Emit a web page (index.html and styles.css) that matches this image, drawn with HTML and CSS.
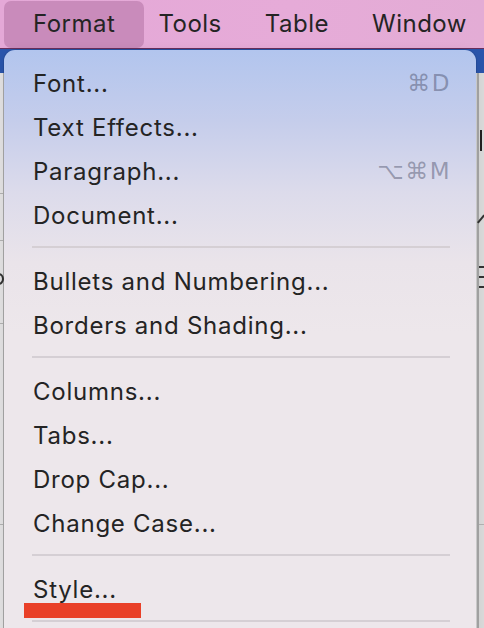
FILE: index.html
```html
<!DOCTYPE html>
<html>
<head>
<meta charset="UTF-8">
<meta name="viewport" content="width=device-width, initial-scale=1.0">
<title>Format menu</title>
<link rel="stylesheet" href="styles.css">
</head>
<body>
	<div class="menubar">
		<div class="bar-item active">Format</div>
		<div class="bar-item">Tools</div>
		<div class="bar-item">Table</div>
		<div class="bar-item">Window</div>
	</div>
	<div class="workspace">
		<div class="ribbon"></div>
		<div class="doc">
			<div class="side left">
				<span class="tick t1"></span>
				<span class="tick t2"></span>
				<span class="tick t3"></span>
				<span class="tick t4"></span>
				<span class="ring"></span>
			</div>
			<div class="side right">
				<span class="cursor"></span>
				<span class="slash"></span>
				<span class="list"><i></i><i></i><i></i></span>
				<span class="tick t4"></span>
			</div>
		</div>

		<!-- dropdown over the document -->
		<div class="menu">
			<div class="item"><span>Font...</span><span class="key">&#8984;D</span></div>
			<div class="item"><span>Text Effects...</span></div>
			<div class="item"><span>Paragraph...</span><span class="key">&#8997;&#8984;M</span></div>
			<div class="item"><span>Document...</span></div>
			<div class="sep"></div>
			<div class="item"><span>Bullets and Numbering...</span></div>
			<div class="item"><span>Borders and Shading...</span></div>
			<div class="sep"></div>
			<div class="item"><span>Columns...</span></div>
			<div class="item"><span>Tabs...</span></div>
			<div class="item"><span>Drop Cap...</span></div>
			<div class="item"><span>Change Case...</span></div>
			<div class="sep"></div>
			<div class="item"><span>Style...</span></div>
			<div class="sep"></div>
		</div>
		<div class="mark"></div>
	</div>
</body>
</html>
```
FILE: styles.css
```css
/* base */
html, body {margin:0; padding:0;}
body {
	width:484px; height:628px; overflow:hidden;
	font-family:Inter, "Noto Sans", "DejaVu Sans", sans-serif;
	color:#242424;
	background:#e7e6e7;
}

/* top menu bar */
.menubar {
	display:flex; align-items:center; gap:43px;
	height:48px; padding-left:33px;
	background:linear-gradient(90deg, #e4a8d7 0%, #e6abd8 60%, #e3acd5 100%);
	border-bottom:1px solid #6b2f5c;
	font-size:24px;
	letter-spacing:0.5px;
}
.bar-item {position:relative; height:47px; line-height:45px; white-space:nowrap;}
.bar-item.active::before {
	content:""; position:absolute; z-index:-1;
	left:-29px; right:-29px; top:0; bottom:0;
	border-radius:7px;
	background:#c98bbb;
}
.bar-item.active {z-index:0;}

/* app behind the menu */
.workspace {position:relative; height:579px;}
.ribbon {height:24px; background:#2a55ad;}
.doc {position:relative; height:555px; display:flex; justify-content:space-between;}
.side {position:relative; height:100%;}
.side.left {border-right:1px solid #b9b9b9; width:3px;}
.side.right {border-left:2px solid #a8a8a8; width:5px; background:#dcdcdc;}
.tick {position:absolute; left:0; width:100%; height:1px; background:#b4b4b4;}
.t1 {top:120px;}
.t2 {top:167px;}
.t3 {top:250px;}
.t4 {top:451px;}
.ring {position:absolute; left:-7px; top:200px; width:7px; height:8px; border:2px solid #333; border-radius:50%;}
.cursor {position:absolute; left:1px; top:57px; width:2px; height:21px; background:#222;}
.slash {position:absolute; left:1px; top:141px; width:2px; height:10px; background:#333; transform:rotate(40deg);}
.list {position:absolute; left:0; top:193px; width:6px;}
.list i {display:block; height:2px; margin-bottom:8px; background:#333;}

/* dropdown */
.menu {
	position:absolute; left:4px; top:1px;
	width:472px;
	padding:11px 26px 0 29px;
	box-sizing:border-box;
	height:590px;
	border-radius:11px 11px 0 0;
	background:linear-gradient(180deg, #b2c5ee 0%, #c5cdeb 12%, #dcdbeb 24%, #eae4ea 36%, #ede7eb 48%, #ede7eb 100%);
	box-shadow:0 0 0 1px rgba(0,0,0,0.08), 0 4px 14px rgba(0,0,0,0.12);
	font-size:24px;
}
.item {
	display:flex; justify-content:space-between; align-items:center;
	height:44px;
	letter-spacing:0.75px;
	white-space:nowrap;
}
.key {
	color:rgba(60,64,90,0.42);
	font-family:"DejaVu Sans", sans-serif;
	font-size:23px;
	letter-spacing:1.5px;
	margin-right:-1px;
}
.sep {height:22px; position:relative; margin-left:-1px; margin-right:0;}
.sep::before {
	content:""; position:absolute; left:0; right:0; top:9px;
	height:2px; background:#d5cfd4;
}

/* red annotation under Style... */
.mark {
	position:absolute; left:24px; top:554px;
	width:117px; height:15px;
	background:#e94028;
}
```
